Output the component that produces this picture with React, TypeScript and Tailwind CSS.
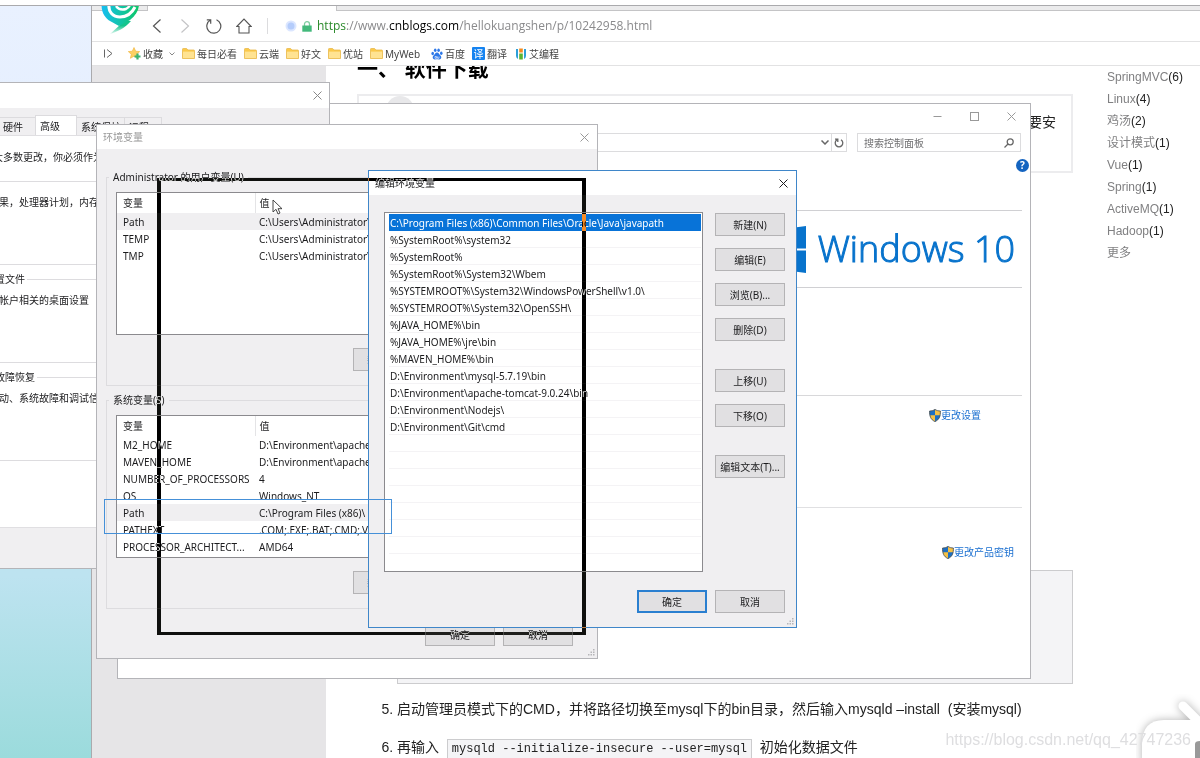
import type { ReactNode } from 'react';

type Variable = { name: string; value: string };

const userVars: Variable[] = [
  { name: 'Path', value: 'C:\\Users\\Administrator\\' },
  { name: 'TEMP', value: 'C:\\Users\\Administrator\\' },
  { name: 'TMP', value: 'C:\\Users\\Administrator\\' },
];

const systemVars: Variable[] = [
  { name: 'M2_HOME', value: 'D:\\Environment\\apache' },
  { name: 'MAVEN_HOME', value: 'D:\\Environment\\apache' },
  { name: 'NUMBER_OF_PROCESSORS', value: '4' },
  { name: 'OS', value: 'Windows_NT' },
  { name: 'Path', value: 'C:\\Program Files (x86)\\' },
  { name: 'PATHEXT', value: '.COM;.EXE;.BAT;.CMD;.V' },
  { name: 'PROCESSOR_ARCHITECT...', value: 'AMD64' },
];

const paths = [
  'C:\\Program Files (x86)\\Common Files\\Oracle\\Java\\javapath',
  '%SystemRoot%\\system32',
  '%SystemRoot%',
  '%SystemRoot%\\System32\\Wbem',
  '%SYSTEMROOT%\\System32\\WindowsPowerShell\\v1.0\\',
  '%SYSTEMROOT%\\System32\\OpenSSH\\',
  '%JAVA_HOME%\\bin',
  '%JAVA_HOME%\\jre\\bin',
  '%MAVEN_HOME%\\bin',
  'D:\\Environment\\mysql-5.7.19\\bin',
  'D:\\Environment\\apache-tomcat-9.0.24\\bin',
  'D:\\Environment\\Nodejs\\',
  'D:\\Environment\\Git\\cmd',
  '', '', '', '', '', '', '',
];

const tags = [
  { name: 'SpringMVC', count: 6 }, { name: 'Linux', count: 4 },
  { name: '鸡汤', count: 2 }, { name: '设计模式', count: 1 },
  { name: 'Vue', count: 1 }, { name: 'Spring', count: 1 },
  { name: 'ActiveMQ', count: 1 }, { name: 'Hadoop', count: 1 },
];

const folders = ['每日必看', '云端', '好文', '优站', 'MyWeb'];

const CloseIcon = () => (
  <svg className="size-[9px]" viewBox="0 0 9 9" fill="none" stroke="currentColor" strokeWidth="1">
    <path d="M0.5 0.5 8.5 8.5M8.5 0.5 0.5 8.5" />
  </svg>
);

const FolderIcon = () => (
  <svg className="h-[11px] w-[13px]" viewBox="0 0 13 11">
    <path d="M0.5 1.2Q0.5 0.5 1.2 0.5H4.6L6 2H11.8Q12.5 2 12.5 2.7V10.5H0.5Z" fill="#fbc94a" stroke="#e9b94c" strokeWidth="0.8" />
    <path d="M1 3.6H12V10H1Z" fill="#ffe392" />
  </svg>
);

const ShieldIcon = () => (
  <svg className="h-[13px] w-3" viewBox="0 0 12 13">
    <path d="M6 0.4C4.5 1.5 2.5 2 0.6 2C0.5 7 1.5 10.5 6 12.6C10.5 10.5 11.5 7 11.4 2C9.5 2 7.5 1.5 6 0.4Z" fill="#f5c043" />
    <path d="M6 0.4V6.3H0.8C0.5 4.8 0.6 3.4 0.6 2C2.5 2 4.5 1.5 6 0.4Z" fill="#1c6fc4" />
    <path d="M6 6.3V12.6C9.2 11.1 10.7 9.1 11.2 6.3Z" fill="#1c6fc4" />
    <path d="M6 0.4C4.5 1.5 2.5 2 0.6 2C0.5 7 1.5 10.5 6 12.6C10.5 10.5 11.5 7 11.4 2C9.5 2 7.5 1.5 6 0.4Z" fill="none" stroke="#4a5560" strokeWidth="0.9" />
  </svg>
);

const Grip = () => (
  <svg className="absolute right-[2px] bottom-[2px] size-[7px]" viewBox="0 0 7 7" fill="#b5b5b8">
    <path d="M5 0h1.5v1.5H5zM2.5 2.5H4V4H2.5zM5 2.5h1.5V4H5zM0 5h1.5v1.5H0zM2.5 5H4v1.5H2.5zM5 5h1.5v1.5H5z" />
  </svg>
);

const Button = ({ children, primary }: { children: ReactNode; primary?: boolean }) => (
  <button
    type="button"
    className={
      primary
        ? 'h-[23px] w-[70px] shrink-0 border-2 border-[#2a7fd0] bg-[#e1e0e2] whitespace-nowrap'
        : 'h-[23px] w-[70px] shrink-0 border border-[#b4b3b5] bg-[#e1e0e2] whitespace-nowrap'
    }
  >
    {children}
  </button>
);

const VariableTable = ({ rows }: { rows: Variable[] }) => (
  <div className="h-[143px] overflow-hidden border border-[#8b8a8e] bg-white">
    <table className="w-full table-fixed border-collapse text-left">
      <thead>
        <tr className="h-5">
          <th className="w-[138px] border-r border-[#e4e4e6] p-0 pl-[6px] font-normal">变量</th>
          <th className="p-0 pl-1 font-normal">值</th>
        </tr>
      </thead>
      <tbody>
        {rows.map(v => (
          <tr key={v.name} className={v.name === 'Path' ? 'h-[17px] bg-[#f0eff1]' : 'h-[17px]'}>
            <td className="p-0 pl-[6px] whitespace-nowrap">{v.name}</td>
            <td className="p-0 pl-1 whitespace-nowrap">{v.value}</td>
          </tr>
        ))}
      </tbody>
    </table>
  </div>
);

const VariableGroup = ({ title, rows }: { title: string; rows: Variable[] }) => (
  <fieldset className="h-[217px] border border-[#dddcdf] px-[9px]">
    <legend className="-ml-[7px] px-1 leading-4">{title}</legend>
    <div className="pt-[7px]">
      <VariableTable rows={rows} />
    </div>
    <div className="mt-[13px] flex pl-[237px]">
      <Button>新建(N)...</Button>
    </div>
  </fieldset>
);

const PropGroup = ({ title, text }: { title: string; text: string }) => (
  <fieldset className="h-[92px] border border-[#dddcdf] px-[9px]">
    <legend className="-ml-[6px] px-[2px] leading-4">{title}</legend>
    <p className="pt-[5px] leading-4 whitespace-nowrap">{text}</p>
  </fieldset>
);

const Browser = () => (
  <div className="absolute top-[5px] right-0 bottom-0 left-[91px] flex flex-col overflow-hidden border-t border-l border-[#aaaaad] bg-white">
    <div className="flex h-[5px] shrink-0 justify-between">
      <div className="w-14 border-r border-b border-[#c4c4c6] bg-[#ebebec]" />
      <div className="ml-[188px] flex-1 border-b border-l border-[#c4c4c6] bg-[#ebebec]" />
    </div>
    <div className="flex h-[31px] shrink-0 items-center border-b border-[#e2e2e3] pl-[60px] text-[#555]">
      <button type="button" aria-label="后退" className="w-[27px]">
        <svg className="size-[14px]" viewBox="0 0 14 14" fill="none" stroke="currentColor" strokeWidth="1.2"><path d="M8.5 0.5 1.5 7 8.5 13.5" /></svg>
      </button>
      <button type="button" aria-label="前进" className="w-[27px] text-[#c4c4c6]">
        <svg className="size-[14px]" viewBox="0 0 14 14" fill="none" stroke="currentColor" strokeWidth="1.2"><path d="M2.5 0.5 9.5 7 2.5 13.5" /></svg>
      </button>
      <button type="button" aria-label="刷新" className="w-[30px]">
        <svg className="size-4" viewBox="0 0 16 16" fill="none" stroke="currentColor" strokeWidth="1.2">
          <path d="M4.5 2A7 7 0 1 0 10.5 1.7M0.8 1.8H4.7V5.7" />
        </svg>
      </button>
      <button type="button" aria-label="主页" className="w-[31px]">
        <svg className="size-4" viewBox="0 0 16 16" fill="none" stroke="currentColor" strokeWidth="1.1"><path d="M0.8 8.5 8 1 15.2 8.5H13V15H3V8.5Z" /></svg>
      </button>
      <div className="h-4 w-px bg-[#dcdcde]" />
      <svg className="ml-[17px] size-3" viewBox="0 0 12 12"><circle cx="6" cy="6" r="5.5" fill="#dbe6ff" /><circle cx="6" cy="6" r="3.5" fill="#b4ccfb" /></svg>
      <svg className="mx-[5px] h-[11px] w-[10px]" viewBox="0 0 10 11">
        <path d="M2.5 5V3A2.5 2.3 0 0 1 7.5 3V5" fill="none" stroke="#7fcda0" strokeWidth="1.3" />
        <path d="M0.3 4.5H9.7V10.7H0.3Z" fill="#43b97b" />
      </svg>
      <span className="font-['Open_Sans',sans-serif] text-[12px] whitespace-nowrap text-[#8a8a8c]">
        <span className="text-[#2a8a2a]">https</span>://www.<span className="text-black">cnblogs.com</span>/hellokuangshen/p/10242958.html
      </span>
    </div>
    <nav className="flex h-6 shrink-0 items-center gap-[7px] border-b border-[#e2e2e3] pl-3 text-[10px] text-[#444]">
      <svg className="mr-2 h-[9px] w-[9px]" viewBox="0 0 9 9" fill="none" stroke="#666" strokeWidth="1"><path d="M0.5 0.5V8.5M3 0.5 8 4.5 3 8.5" /></svg>
      <a href="#fav" className="flex items-center gap-[2px]">
        <svg className="size-[13px]" viewBox="0 0 13 13">
          <path d="M6 0.5 7.7 4.2 11.7 4.6 8.7 7.3 9.6 11.3 6 9.2 2.4 11.3 3.3 7.3 0.3 4.6 4.3 4.2Z" fill="#fcd063" stroke="#f0b135" strokeWidth="0.6" />
          <path d="M9.5 6.5V12.5M6.5 9.5H12.5" stroke="#3cb371" strokeWidth="2.2" />
        </svg>
        收藏
        <svg className="ml-1 h-1 w-[6px]" viewBox="0 0 6 4" fill="none" stroke="#888" strokeWidth="1"><path d="M0.5 0.5 3 3 5.5 0.5" /></svg>
      </a>
      {folders.map(f => (
        <a key={f} href="#folder" className="flex items-center gap-[2px] whitespace-nowrap"><FolderIcon />{f}</a>
      ))}
      <a href="#baidu" className="flex items-center gap-[2px] pl-1">
        <svg className="size-3" viewBox="0 0 12 12" fill="#2d78e8">
          <ellipse cx="1.7" cy="5.5" rx="1.3" ry="1.7" /><ellipse cx="4.2" cy="2.2" rx="1.3" ry="1.8" />
          <ellipse cx="7.6" cy="2.2" rx="1.3" ry="1.8" /><ellipse cx="10.3" cy="5.3" rx="1.3" ry="1.7" />
          <path d="M6 4.6C4.3 4.6 4 6.3 2.6 7.5C0.9 9 1.8 11.6 4 11.4C5.4 11.2 6.6 11.2 8 11.4C10.2 11.6 11.1 9 9.4 7.5C8 6.3 7.7 4.6 6 4.6Z" />
          <path d="M4 8.5H5.5V10.3H4ZM6.5 8.5V10.3H8V8.5" fill="none" stroke="#fff" strokeWidth="0.6" />
        </svg>
        百度
      </a>
      <a href="#fanyi" className="flex items-center gap-[2px]">
        <span className="flex size-[13px] items-center justify-center rounded-[1px] bg-[#1583f0] leading-none text-white">译</span>翻译
      </a>
      <a href="#icode" className="flex items-center gap-[2px] pl-[1px]">
        <svg className="size-3" viewBox="0 0 12 12">
          <path d="M1 1H3V11Q1 10 1 8Z" fill="#2d9fd8" /><path d="M9 1H11V8Q11 10 9 11Z" fill="#2d9fd8" />
          <path d="M4.2 0.5H7.8V4.5H4.2Z" fill="#f58a1f" /><path d="M4.2 5.5H7.8V11.5H4.2Z" fill="#5cb531" />
        </svg>
        艾编程
      </a>
    </nav>
    {/* browser logo hangs over the tab strip */}
    <svg className="absolute top-0 left-[9px] h-[28px] w-[39px]" viewBox="0 0 39 28">
      <defs>
        <linearGradient id="pin" x1="0" x2="1"><stop offset="0" stopColor="#17bdf2" /><stop offset="0.5" stopColor="#12c4a8" /><stop offset="1" stopColor="#0dc765" /></linearGradient>
        <linearGradient id="tail" x1="0" x2="0" y1="0" y2="1"><stop offset="0.4" stopColor="#14c48c" /><stop offset="1" stopColor="#14c48c" stopOpacity="0.1" /></linearGradient>
      </defs>
      <path d="M14 14 19 19 9 28C16 26 24 22 30 15Z" fill="url(#tail)" />
      <path d="M0.5 -2C0.5 7 4 12 9 15L18 20L29 14C35 9 38 4 38 -2Z" fill="url(#pin)" />
      <path d="M8 -2C7 6 12 11 19 11C26 11 31 7 34 1" fill="none" stroke="#fff" strokeWidth="3" />
      <path d="M15 0C17 3 21 4 25 3C27 2 28 1 29 -1" fill="none" stroke="#fff" strokeWidth="2.4" />
    </svg>

    <div className="flex min-h-0 flex-1 overflow-hidden bg-[#e6e5e7] pl-[234px]">
      <div className="flex flex-1 justify-between bg-white pl-[31px] font-['Liberation_Sans','Noto_Sans_CJK_SC',sans-serif] text-[#222]">
        <article className="w-[716px] text-[14px]">
          <h2 className="-mt-[13px] text-[21px] leading-8 font-bold whitespace-pre text-black">一、 软件下载</h2>
          <blockquote className="mt-[9px] flex h-[79px] justify-between border-2 border-[#ececee] px-[15px]">
            <svg className="ml-[12px] size-7" viewBox="0 0 28 28"><circle cx="14" cy="14" r="14" fill="#e8e8ea" /></svg>
            <p className="pt-[14px] leading-6">要安</p>
          </blockquote>
          <ol start={5} className="mt-[397px] flex list-decimal flex-col pl-10">
            <li className="list-none"><pre className="h-[114px] border border-[#ccccce] bg-[#f4f4f6]" /></li>
            <li value={5} className="mt-[13px] leading-6 whitespace-nowrap">启动管理员模式下的CMD，并将路径切换至mysql下的bin目录，然后输入mysqld –install&nbsp; (安装mysql)</li>
            <li className="mt-[14px] leading-6 whitespace-nowrap">
              再输入&nbsp;{' '}
              <code className="border border-[#ccccce] bg-[#f4f4f6] px-1 py-[2px] font-['Liberation_Mono',monospace] text-[12px]">mysqld --initialize-insecure --user=mysql</code>
              {' '}&nbsp;初始化数据文件
            </li>
          </ol>
        </article>
        <aside className="w-[93px] text-[12px] leading-[22px]">
          {tags.map(t => (
            <div key={t.name}><a href="#tag" className="text-[#808082]">{t.name}</a>({t.count})</div>
          ))}
          <a href="#more" className="text-[#808082]">更多</a>
        </aside>
      </div>
    </div>
  </div>
);

const SystemWindow = () => (
  <section className="absolute top-[103px] left-[117px] flex h-[576px] w-[914px] flex-col border border-[#b4b4b8] bg-white">
    <header className="flex h-6 items-center justify-end gap-7 pr-[14px] text-[#999]">
      <button type="button" aria-label="最小化"><svg className="h-[9px] w-[9px]" viewBox="0 0 9 9" stroke="currentColor"><path d="M0.5 4.5H8.5" /></svg></button>
      <button type="button" aria-label="最大化" className="size-[9px] border border-[#999]" />
      <button type="button" aria-label="关闭"><CloseIcon /></button>
    </header>
    <div className="mt-[5px] flex justify-end gap-[10px] pr-[9px]">
      <div className="flex h-[19px] w-[600px] justify-end border border-[#dcdcde] text-[#666]">
        <button type="button" aria-label="历史" className="px-[2px]"><svg className="h-[5px] w-2" viewBox="0 0 8 5" fill="none" stroke="currentColor" strokeWidth="1.5"><path d="M0.5 0.5 4 4 7.5 0.5" /></svg></button>
        <button type="button" aria-label="刷新" className="border-l border-[#dcdcde] px-[2px]">
          <svg className="size-[10px]" viewBox="0 0 10 10" fill="none" stroke="currentColor" strokeWidth="1.3"><path d="M3 1.8A3.8 3.8 0 1 0 7 1.8M1 1.2H3.8V4" /></svg>
        </button>
      </div>
      <label className="flex h-[19px] w-[164px] items-center border border-[#dcdcde] px-[6px]">
        <input aria-label="搜索控制面板" placeholder="搜索控制面板" className="min-w-0 flex-1 outline-none placeholder:text-[#707072]" />
        <svg className="size-[10px]" viewBox="0 0 10 10" fill="none" stroke="#666" strokeWidth="1.3"><circle cx="6.2" cy="3.8" r="3" /><path d="M4 6 0.5 9.5" /></svg>
      </label>
    </div>
    <div className="flex justify-end pt-[7px] pr-[1px]">
      <button type="button" aria-label="帮助" className="size-[13px] rounded-full bg-[#1464c0] text-[10px] leading-[13px] font-bold text-white">?</button>
    </div>
    <div className="mt-[38px] mr-2 ml-[200px] flex h-[78px] items-center justify-end gap-3 border-y border-[#d0d0d3] pr-[7px] text-[#0873cc]">
      <svg className="h-[47px] w-[47px]" viewBox="0 0 47 47" fill="currentColor"><path d="M0 6.5 19 4V22.5H0ZM21 3.5 47 0V22.5H21ZM0 24.5H19V43L0 40.5ZM21 24.5H47V47L21 43.5Z" /></svg>
      <span className="font-['Open_Sans',sans-serif] text-[36px] leading-none font-light whitespace-nowrap [-webkit-text-stroke:1px_#0873cc]">Windows 10</span>
    </div>
    <div className="mr-2 ml-[200px] flex h-[108px] items-end border-b border-[#d8d8da]" />
    <div className="mr-2 ml-[200px] flex h-[112px] justify-end border-b border-[#e0e0e2] pt-3 pr-[41px] text-[#1a6fd0]">
      <a href="#settings" className="flex h-[14px] items-center">
        <ShieldIcon />更改设置
      </a>
    </div>
    <div className="mr-2 ml-[200px] flex justify-end pt-[37px] pr-2 text-[#1a6fd0]">
      <a href="#key" className="flex h-[14px] items-center">
        <ShieldIcon />更改产品密钥
      </a>
    </div>
  </section>
);

const SystemProperties = () => (
  <section className="absolute top-[82px] -left-[55px] flex h-[487px] w-[385px] flex-col border border-[#b4b4b8] bg-[#f0eff1]">
    <header className="flex h-[25px] items-center justify-end bg-white pr-[7px] text-[#888]">
      <button type="button" aria-label="关闭"><CloseIcon /></button>
    </header>
    <div role="tablist" className="flex h-[27px] items-end pl-[52px] text-left whitespace-nowrap">
      <button type="button" role="tab" className="h-[18px] w-[37px] border border-r-0 border-b-0 border-[#dcdbde] pl-1 text-left">硬件</button>
      <button type="button" role="tab" className="h-5 w-[42px] border border-b-0 border-[#dcdbde] bg-white pl-1 text-left">高级</button>
      <button type="button" role="tab" className="h-[18px] w-[48px] border border-b-0 border-l-0 border-[#dcdbde] pl-1 text-left">系统保护</button>
      <button type="button" role="tab" className="h-[18px] w-[37px] border border-b-0 border-l-0 border-[#dcdbde] pl-1 text-left">远程</button>
    </div>
    <div className="ml-2 h-[393px] border border-[#e0dfe2] bg-white pt-[13px] pl-1">
      <p className="pl-1 leading-4 whitespace-nowrap">要进行大多数更改，你必须作为</p>
      <div className="mt-2 flex flex-col gap-[6px] pr-3">
        <PropGroup title="性能" text="视觉效果，处理器计划，内存" />
        <PropGroup title="用户配置文件" text="与登录帐户相关的桌面设置" />
        <PropGroup title="启动和故障恢复" text="系统启动、系统故障和调试信" />
      </div>
    </div>
  </section>
);

const EnvironmentWindow = () => (
  <section className="absolute top-[124px] left-24 flex h-[535px] w-[502px] flex-col border border-[#b4b4b8] bg-[#f0eff1]">
    <header className="flex h-6 items-center justify-between bg-white pr-2 pl-[6px] text-[#999]">
      环境变量
      <button type="button" aria-label="关闭"><CloseIcon /></button>
    </header>
    <div className="flex flex-col gap-[6px] px-[9px] pt-5">
      <VariableGroup title="Administrator 的用户变量(U)" rows={userVars} />
      <VariableGroup title="系统变量(S)" rows={systemVars} />
    </div>
    <div className="mt-[14px] flex justify-end gap-2 pr-6">
      <Button>确定</Button>
      <Button>取消</Button>
    </div>
    <Grip />
  </section>
);

const EditWindow = () => (
  <section className="absolute top-[170px] left-[368px] flex h-[458px] w-[429px] flex-col border border-[#3f86c9] bg-[#f0eff1]">
    <header className="flex h-6 items-center justify-between bg-white pr-2 pl-[6px]">
      编辑环境变量
      <button type="button" aria-label="关闭"><CloseIcon /></button>
    </header>
    <div className="flex justify-between pt-[17px] pr-[11px] pl-[15px]">
      <ul className="h-[360px] w-[319px] border border-[#8b8a8e] bg-white pt-px pr-px pl-1">
        {paths.map((p, i) => (
          <li
            key={i}
            className={
              i === 0
                ? 'h-[17px] bg-[#0873d8] pl-px leading-[18px] whitespace-nowrap text-white'
                : 'h-[17px] border-b border-[#f4f3f5] pl-px leading-[18px] whitespace-nowrap'
            }
          >
            {p}
          </li>
        ))}
      </ul>
      <div className="flex flex-col gap-3 pt-px">
        <Button>新建(N)</Button>
        <Button>编辑(E)</Button>
        <Button>浏览(B)...</Button>
        <Button>删除(D)</Button>
        <div className="flex flex-col gap-3 py-4">
          <Button>上移(U)</Button>
          <Button>下移(O)</Button>
        </div>
        <Button>编辑文本(T)...</Button>
      </div>
    </div>
    <div className="mt-[18px] flex justify-end gap-2 pr-[11px]">
      <Button primary>确定</Button>
      <Button>取消</Button>
    </div>
    <Grip />
  </section>
);

export default function App() {
  return (
    <main className="relative h-screen overflow-hidden bg-white font-['Noto_Sans','Noto_Sans_CJK_SC',sans-serif] text-[10px] leading-4 text-[#1c1c1e]">
      <div className="flex h-full flex-col pt-[5px]">
        <div className="h-[300px] border-t border-[#aaaaad] bg-linear-to-b from-[#e9f1ff] to-[#e0ecfc]" />
        <div className="w-[91px] flex-1 bg-linear-to-b from-[#bde3f0] from-60% to-[#9bdbdc]" />
      </div>
      <Browser />
      <SystemWindow />
      <SystemProperties />
      <EnvironmentWindow />
      <EditWindow />

      {/* inverted drag outline */}
      <div className="absolute top-[178px] left-[157px] h-[457px] w-[429px] border-4 border-t-3 border-b-3 border-white mix-blend-difference" />
      <div className="absolute top-[499px] left-[104px] h-[35px] w-[288px] border border-[#4590d8]" />
      <svg className="absolute top-[199px] left-[272px] h-4 w-[11px]" viewBox="0 0 11 16" fill="#fff" stroke="#333" strokeWidth="0.9"><path d="M1 1V13L4 10.3 6 15 8 14 6 9.7H10Z" /></svg>

      <svg className="absolute right-0 bottom-0 h-[64px] w-[64px]" viewBox="0 0 64 64">
        <g fill="#fff" style={{ filter: 'drop-shadow(0 0 4px rgb(0 0 0 / 0.3))' }}>
          <path d="M47 12 62 27" stroke="#fff" strokeWidth="9" strokeLinecap="round" />
          <path d="M6 70V50Q6 26 28 26H70V70Z" />
        </g>
        <path d="M59 64V50Q59 47 64 47V64Z" fill="#999" />
      </svg>
      <span className="absolute right-[9px] bottom-[8px] font-['Liberation_Sans',sans-serif] text-[16px] leading-5 text-[#dedee0]">https://blog.csdn.net/qq_42747236</span>
    </main>
  );
}
